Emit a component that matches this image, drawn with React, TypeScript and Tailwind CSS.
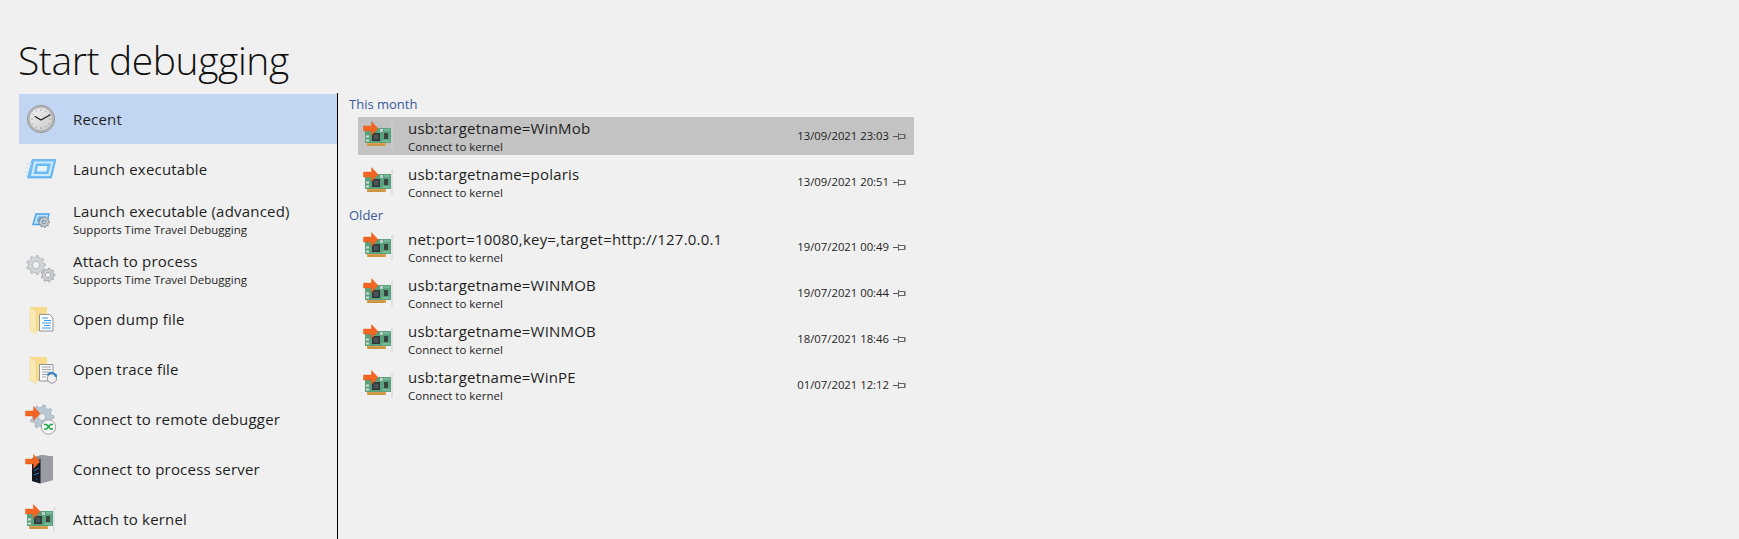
import type { ReactNode } from 'react';

function gearPath(cx: number, cy: number, r: number, hole: number, teeth: number) {
  const pts: string[] = [];
  const step = (Math.PI * 2) / teeth;
  for (let i = 0; i < teeth; i++) {
    const a = i * step;
    const rows: [number, number][] = [
      [a - step * 0.27, r * 0.8],
      [a - step * 0.14, r],
      [a + step * 0.14, r],
      [a + step * 0.27, r * 0.8],
    ];
    rows.forEach(([t, d]) => pts.push(`${(cx + Math.cos(t) * d).toFixed(2)} ${(cy + Math.sin(t) * d).toFixed(2)}`));
  }
  const ring = `M${cx - hole} ${cy}a${hole} ${hole} 0 1 0 ${hole * 2} 0a${hole} ${hole} 0 1 0 ${-hole * 2} 0Z`;
  return `M${pts.join('L')}Z${ring}`;
}

function Gear({ cx, cy, r, hole, fill = '#c4c8cc', stroke = '#8e9296' }: { cx: number; cy: number; r: number; hole: number; fill?: string; stroke?: string }) {
  return <path d={gearPath(cx, cy, r, hole, 9)} fill={fill} stroke={stroke} strokeWidth="0.7" fillRule="evenodd" />;
}

function Icon({ children }: { children: ReactNode }) {
  return (
    <svg width="32" height="32" viewBox="0 0 32 32" className="shrink-0">
      {children}
    </svg>
  );
}

function Arrow({ dy = 0 }: { dy?: number }) {
  return <path transform={`translate(0 ${dy})`} d="M0.5 6h8V1.5L15 8.5 8.5 15.5V11h-8Z" fill="#f26522" stroke="#e2560f" strokeWidth="0.4" />;
}

function ClockIcon() {
  return (
    <Icon>
      <defs>
        <linearGradient id="clockFace" x1="0" y1="0" x2="1" y2="1">
          <stop offset="0" stopColor="#f4f4f4" />
          <stop offset="1" stopColor="#c9c9c9" />
        </linearGradient>
      </defs>
      <circle cx="16" cy="16" r="13.6" fill="#b9b9b9" stroke="#8c8c8c" strokeWidth="0.8" />
      <circle cx="16" cy="16" r="11.6" fill="url(#clockFace)" stroke="#9a9a9a" strokeWidth="0.5" />
      <path d="M16 6v2M16 24v2M6 16h2M24 16h2M11 7.5l.7 1.2M21 7.5l-.7 1.2M7.5 11l1.2.7M7.5 21l1.2-.7M24.5 11l-1.2.7M24.5 21l-1.2-.7M11 24.5l.7-1.2M21 24.5l-.7-1.2" stroke="#8a8a8a" strokeWidth="0.8" />
      <path d="M16 17l-6-3.4M16 17l9-5" stroke="#1d1d1d" strokeWidth="1.2" fill="none" strokeLinecap="round" />
    </Icon>
  );
}

function ExeIcon() {
  return (
    <Icon>
      <path d="M7 6.5h24L26.5 25H2.5Z" fill="#6dbcf3" stroke="#4ca6ea" strokeWidth="0.6" />
      <path d="M9 8.5h19.5L25 23H6Z" fill="#cfe9fc" />
      <path d="M11 10.5h15L23.3 21H8.6Z" fill="#6dbcf3" />
      <path d="M13 13h9.5l-1.3 5.5H11.8Z" fill="#e6f4fd" />
      <path d="M1 11h6M0.5 15h5M0 19h4M0 23h3" stroke="#c3e3f9" strokeWidth="1" />
    </Icon>
  );
}

function ExeAdvancedIcon() {
  return (
    <Icon>
      <path d="M11 11h13l-2.5 10.5H8Z" fill="#bfe2fb" stroke="#4aa4ea" strokeWidth="1.4" />
      <path d="M13 13.5h7l-1.2 5.5h-7Z" fill="#63b3ef" />
      <Gear cx={19} cy={19} r={5.5} hole={1.8} fill="#c8ccd0" stroke="#6e7276" />
    </Icon>
  );
}

function GearsIcon() {
  return (
    <Icon>
      <Gear cx={11} cy={12} r={9.5} hole={3.8} fill="#d2d5d8" stroke="#a4a8ac" />
      <Gear cx={23} cy={22} r={7} hole={2.6} fill="#cbced1" stroke="#94989c" />
    </Icon>
  );
}

function Folder() {
  return (
    <>
      <path d="M5 4h17v24H5Z" fill="#f7dc8f" />
      <path d="M5 4l6 4v23l-6-4Z" fill="#fbe9b4" stroke="#e9cc7c" strokeWidth="0.4" />
    </>
  );
}

function DumpIcon() {
  return (
    <Icon>
      <Folder />
      <path d="M14.5 11.5h10l3.5 3.5V28H14.5Z" fill="#fbfcfd" stroke="#8f9498" strokeWidth="1" />
      <path d="M17 15h6M19 17.5h7M17 20h9M19 22.5h6M17 25h9" stroke="#3a9bec" strokeWidth="1" />
    </Icon>
  );
}

function TraceIcon() {
  return (
    <Icon>
      <Folder />
      <path d="M14.5 11.5H28V28H14.5Z" fill="#f6f7f8" stroke="#8f9498" strokeWidth="1" />
      <path d="M17 14h9M17 16.5h9M17 19h9M17 21.5h5M17 24h4" stroke="#a2a6aa" strokeWidth="1" />
      <circle cx="27" cy="25.5" r="4.6" fill="#f1f1f1" stroke="#8f9498" strokeWidth="1" />
      <path d="M22.5 22.5c1.5-3.5 6.5-3.5 8.5 0.5" fill="none" stroke="#2b7fc7" strokeWidth="1.8" />
      <path d="M29 23.5l3 0.5-0.7-3.5Z" fill="#2b7fc7" />
    </Icon>
  );
}

function RemoteIcon() {
  return (
    <Icon>
      <Gear cx={17} cy={14} r={12} hole={3.5} fill="#b9c6d3" stroke="#9aa8b6" />
      <circle cx="23.5" cy="24" r="7.2" fill="#f6f6f6" stroke="#a3a3a3" strokeWidth="1" />
      <path d="M19 26h2.5l4-4.5H28M19 21.5h2.5l4 4.5H28" fill="none" stroke="#1fa84a" strokeWidth="1.6" />
      <Arrow dy={2} />
    </Icon>
  );
}

function ServerIcon() {
  return (
    <Icon>
      <path d="M7 5l9-3 12 1.5v23.5l-13 3.5L7 28Z" fill="#8b8e96" />
      <path d="M16 2l12 1.5v23.5l-13 3.5Z" fill="#9a9ca3" />
      <path d="M7 10l8.5-4v24.5L7 28Z" fill="#141820" />
      <path d="M9 18l5-3M9 22l5-2M11 26h1" stroke="#2a8fe0" strokeWidth="0.9" />
      <Arrow />
    </Icon>
  );
}

function CardIcon() {
  return (
    <Icon>
      <path d="M28.5 5h2M29 5v24" stroke="#cfd2d2" strokeWidth="1" fill="none" />
      <path d="M2 8h26v15H2Z" fill="#5aa27e" />
      <path d="M4 23h19v3H4Z" fill="#d9a050" />
      <path d="M6 24v2M8 24v2M10 24v2M12 24v2M14 24v2M16 24v2M18 24v2M20 24v2" stroke="#b87f30" strokeWidth="0.7" />
      <path d="M9 13h8v8H9Z" fill="#2f3739" />
      <path d="M10.5 14.5h5v5h-5Z" fill="#4a5456" />
      <path d="M21 13h4v6h-4Z" fill="#37443f" />
      <path d="M17 9h3v3h-3Z" fill="#c4cec9" />
      <path d="M3 15.5h3v2H3ZM3 19.5h3v2H3Z" fill="#d7dbd9" />
      <path d="M21 10h6M19 21h8" stroke="#93cfae" strokeWidth="1" />
      <Arrow />
    </Icon>
  );
}

function PinIcon() {
  return (
    <svg width="13" height="9" viewBox="0 0 13 9" className="shrink-0">
      <path d="M0 4.5h5" stroke="#555" strokeWidth="1" />
      <path d="M5.5 1v7M5.5 2.5h6v4h-6M12 2v5" stroke="#666" strokeWidth="1" fill="none" />
    </svg>
  );
}

const menu: { icon: ReactNode; label: string; sub?: string }[] = [
  { icon: <ClockIcon />, label: 'Recent' },
  { icon: <ExeIcon />, label: 'Launch executable' },
  { icon: <ExeAdvancedIcon />, label: 'Launch executable (advanced)', sub: 'Supports Time Travel Debugging' },
  { icon: <GearsIcon />, label: 'Attach to process', sub: 'Supports Time Travel Debugging' },
  { icon: <DumpIcon />, label: 'Open dump file' },
  { icon: <TraceIcon />, label: 'Open trace file' },
  { icon: <RemoteIcon />, label: 'Connect to remote debugger' },
  { icon: <ServerIcon />, label: 'Connect to process server' },
  { icon: <CardIcon />, label: 'Attach to kernel' },
];

const recent = [
  {
    title: 'This month',
    rows: [
      { name: 'usb:targetname=WinMob', date: '13/09/2021 23:03', selected: true },
      { name: 'usb:targetname=polaris', date: '13/09/2021 20:51' },
    ],
  },
  {
    title: 'Older',
    rows: [
      { name: 'net:port=10080,key=,target=http://127.0.0.1', date: '19/07/2021 00:49' },
      { name: 'usb:targetname=WINMOB', date: '19/07/2021 00:44' },
      { name: 'usb:targetname=WINMOB', date: '18/07/2021 18:46' },
      { name: 'usb:targetname=WinPE', date: '01/07/2021 12:12' },
    ],
  },
];

export default function App() {
  return (
    <div className="h-[539px] overflow-hidden bg-[#f0f0f0] text-[#1e1e1e] font-['Open_Sans','Noto_Sans',sans-serif]">
      <h1 className="h-[93px] pl-[18px] pt-[35px] text-[39px] leading-[50px] font-light tracking-[-0.4px] text-[#111]">Start debugging</h1>
      <div className="flex h-[446px]">
        <div className="w-[338px] pl-[19px] border-r border-black pt-px shrink-0">
          {menu.map((item, i) => (
            <div key={item.label} className={`flex h-[50px] items-center gap-[16px] pl-[6px] ${i === 0 ? 'bg-[#c2d5f2]' : ''}`}>
              {item.icon}
              <div className="min-w-0">
                <div className="text-[15px] leading-[18px] tracking-[0.2px]">{item.label}</div>
                {item.sub && <div className="mt-[3px] text-[11.5px] leading-[14px]">{item.sub}</div>}
              </div>
            </div>
          ))}
        </div>
        <div className="w-[576px] pl-[11px] pt-[2px]">
          {recent.map((group) => (
            <div key={group.title} className="-mb-[3px]">
              <div className="h-[22px] text-[13px] leading-[18px] text-[#3a5a9a]">{group.title}</div>
              {group.rows.map((row) => (
                <div
                  key={row.name + row.date}
                  className={`ml-[9px] flex h-[38px] mb-[8px] items-center pl-[5px] pr-[8px] ${row.selected ? 'bg-[#c3c3c3]' : ''}`}
                >
                  <CardIcon />
                  <div className="ml-[13px] flex-1 min-w-0">
                    <div className="text-[15px] leading-[20px] tracking-[0.2px]">{row.name}</div>
                    <div className="mt-[2px] text-[11.5px] leading-[14px]">Connect to kernel</div>
                  </div>
                  <span className="mr-[4px] text-[11.3px]">{row.date}</span>
                  <PinIcon />
                </div>
              ))}
            </div>
          ))}
        </div>
      </div>
    </div>
  );
}
